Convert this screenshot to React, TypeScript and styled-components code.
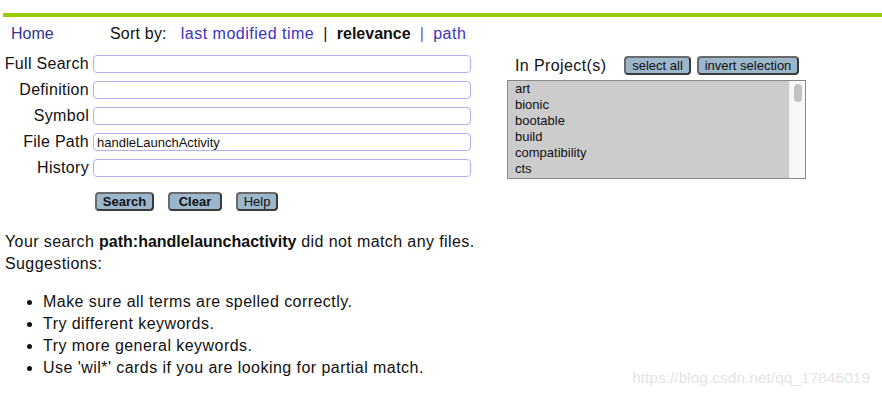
import React from "react";
import styled, { createGlobalStyle } from "styled-components";

const Global = createGlobalStyle`
  html, body { margin: 0; padding: 0; background: #fff; }
  body { font-family: "Liberation Sans", Arial, Helvetica, sans-serif; color: #111; }
`;

const Page = styled.div`
  position: relative;
  width: 882px;
  height: 397px;
  overflow: hidden;
`;

const TopBar = styled.div`
  margin: 13px 0 0 3px;
  height: 4px;
  background: #99cc00;
`;

const Nav = styled.div`
  display: flex;
  align-items: baseline;
  margin-top: 8px;
  padding-left: 11px;
  font-size: 16px;
  line-height: 18px;
  letter-spacing: 0.4px;
`;

const HomeLink = styled.a`
  width: 99px;
  color: #333390;
  text-decoration: none;
  letter-spacing: 0;
`;

const SortLabel = styled.span`
  margin-right: 14px;
  letter-spacing: 0.2px;
`;

const SortLink = styled.a<{ $active?: boolean }>`
  color: ${(p) => (p.$active ? "#111" : "#3a34c0")};
  font-weight: ${(p) => (p.$active ? "bold" : "normal")};
  letter-spacing: ${(p) => (p.$active ? "0" : "0.5px")};
  text-decoration: none;
`;

const Sep = styled.span<{ $dark?: boolean }>`
  padding: 0 9px;
  color: ${(p) => (p.$dark ? "#111" : "#6a5acd")};
`;

const Main = styled.div`
  display: flex;
  margin-top: 12px;
  gap: 36px;
`;

const FormCol = styled.div`
  display: flex;
  flex-direction: column;
`;

const Fields = styled.div`
  display: grid;
  grid-template-columns: 89px 378px;
  column-gap: 4px;
  row-gap: 8px;
  align-items: center;
`;

const Label = styled.label`
  text-align: right;
  font-size: 16px;
  line-height: 18px;
  letter-spacing: 0.3px;
  white-space: nowrap;
`;

const Input = styled.input`
  box-sizing: border-box;
  height: 18px;
  width: 100%;
  margin: 0;
  border: 1px solid #b7aef2;
  border-radius: 4px;
  padding: 0 3px;
  font-family: "Liberation Sans", Arial, sans-serif;
  font-size: 13px;
  color: #111;
  background: #fff;
  outline: none;
`;

const Buttons = styled.div`
  display: flex;
  margin: 15px 0 0 95px;
  gap: 14px;
`;

const Btn = styled.button<{ $w: number; $bold?: boolean }>`
  box-sizing: border-box;
  width: ${(p) => p.$w}px;
  height: 19px;
  margin: 0;
  padding: 0;
  background: #9cb6cc;
  border: 2px solid #505050;
  border-color: #6a6a6a #3a3a3a #3a3a3a #6a6a6a;
  border-radius: 4px;
  font-family: "Liberation Sans", Arial, sans-serif;
  font-size: 13px;
  line-height: 15px;
  font-weight: ${(p) => (p.$bold ? "bold" : "normal")};
  color: #111;
  text-align: center;
`;

const ProjCol = styled.div`
  display: flex;
  flex-direction: column;
  margin-top: 1px;
`;

const ProjHead = styled.div`
  display: flex;
  align-items: center;
  height: 19px;
  gap: 6px;
`;

const ProjTitle = styled.span`
  font-size: 16px;
  line-height: 18px;
  letter-spacing: 0.4px;
  margin-left: 8px;
  width: 103px;
`;

const ListBox = styled.div`
  box-sizing: border-box;
  display: flex;
  width: 299px;
  height: 99px;
  margin-top: 5px;
  border: 1px solid #8a8a8a;
  background: #cccccc;
`;

const Items = styled.div`
  flex: 1;
  padding: 0 0 0 7px;
  font-size: 13px;
  line-height: 16px;
  overflow: hidden;
`;

const Track = styled.div`
  width: 15px;
  background: #f7f7f7;
  border-left: 1px solid #ececec;
  display: flex;
  justify-content: center;
  padding-top: 3px;
`;

const Thumb = styled.div`
  width: 8px;
  height: 18px;
  border-radius: 4px;
  background: #c2c2c2;
`;

const Result = styled.div`
  margin: 20px 0 0 5px;
  font-size: 16px;
  line-height: 22px;
  letter-spacing: 0.4px;
`;

const Query = styled.b`
  letter-spacing: 0;
`;

const List = styled.ul`
  margin: 16px 0 0 0;
  padding-left: 43px;
  font-size: 16px;
  line-height: 22px;
  letter-spacing: 0.45px;
`;

const Watermark = styled.div`
  position: absolute;
  right: 12px;
  bottom: 10px;
  font-size: 15.5px;
  color: #e4e4e4;
`;

const fields = [
  { label: "Full Search", value: "" },
  { label: "Definition", value: "" },
  { label: "Symbol", value: "" },
  { label: "File Path", value: "handleLaunchActivity" },
  { label: "History", value: "" },
];

const projects = ["art", "bionic", "bootable", "build", "compatibility", "cts"];

export default function App() {
  return (
    <Page>
      <Global />
      <TopBar />
      <Nav>
        <HomeLink href="#">Home</HomeLink>
        <SortLabel>Sort by:</SortLabel>
        <SortLink href="#">last modified time</SortLink>
        <Sep $dark>|</Sep>
        <SortLink $active>relevance</SortLink>
        <Sep>|</Sep>
        <SortLink href="#">path</SortLink>
      </Nav>
      <Main>
        <FormCol>
          <Fields>
            {fields.map((f) => (
              <React.Fragment key={f.label}>
                <Label>{f.label}</Label>
                <Input defaultValue={f.value} />
              </React.Fragment>
            ))}
          </Fields>
          <Buttons>
            <Btn $w={59} $bold>Search</Btn>
            <Btn $w={54} $bold>Clear</Btn>
            <Btn $w={42}>Help</Btn>
          </Buttons>
        </FormCol>
        <ProjCol>
          <ProjHead>
            <ProjTitle>In Project(s)</ProjTitle>
            <Btn $w={67}>select all</Btn>
            <Btn $w={102}>invert selection</Btn>
          </ProjHead>
          <ListBox>
            <Items>
              {projects.map((p) => (
                <div key={p}>{p}</div>
              ))}
            </Items>
            <Track>
              <Thumb />
            </Track>
          </ListBox>
        </ProjCol>
      </Main>
      <Result>
        Your search <Query>path:handlelaunchactivity</Query> did not match any files.
        <br />
        Suggestions:
      </Result>
      <List>
        <li>Make sure all terms are spelled correctly.</li>
        <li>Try different keywords.</li>
        <li>Try more general keywords.</li>
        <li>Use 'wil*' cards if you are looking for partial match.</li>
      </List>
      <Watermark>https://blog.csdn.net/qq_17846019</Watermark>
    </Page>
  );
}
